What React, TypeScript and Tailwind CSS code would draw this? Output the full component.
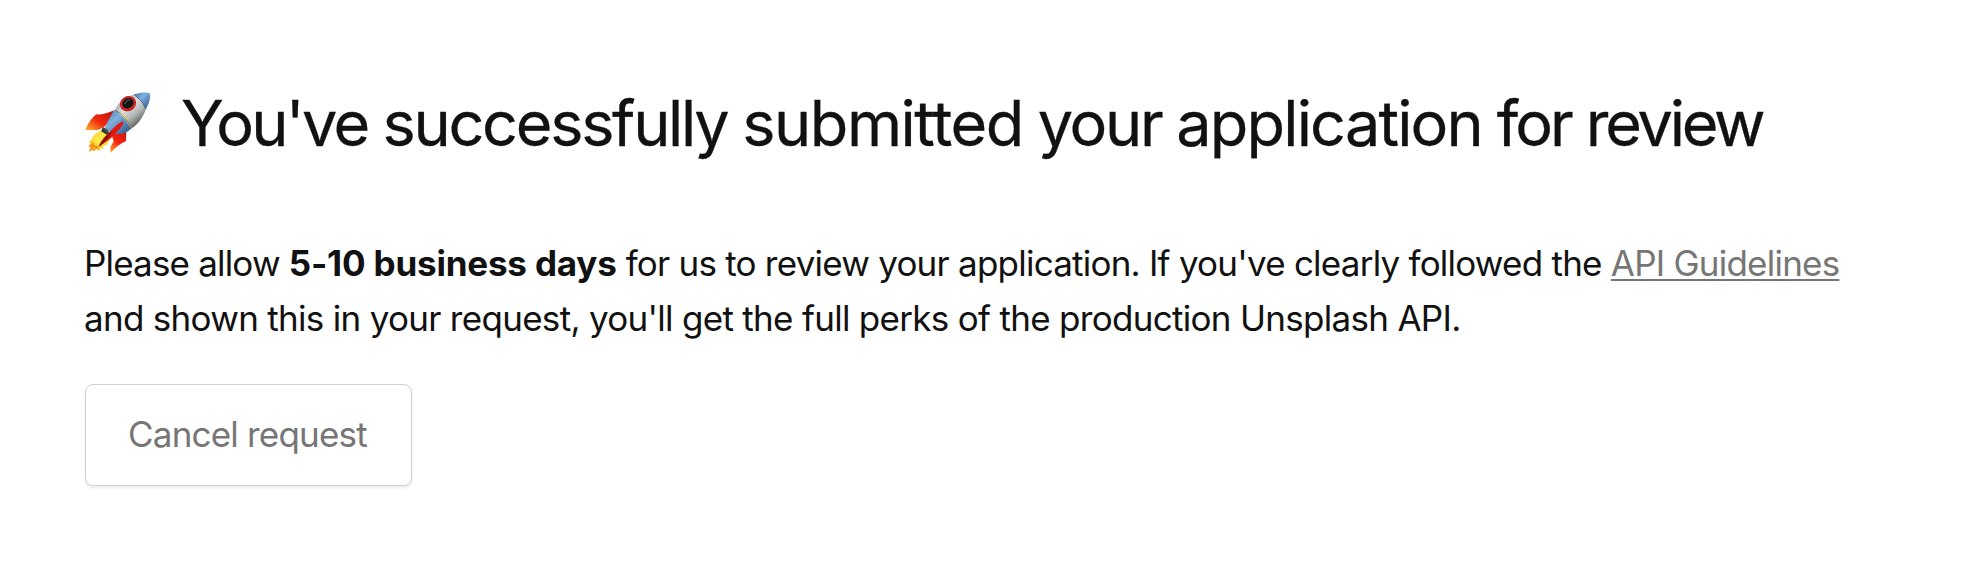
function Rocket() {
  return (
    <svg viewBox="42 33 204 189" className="mb-[4px] h-[63px] w-[68px] shrink-0" aria-hidden="true">
      <defs>
        <linearGradient id="blue" x1="0" y1="0" x2="1" y2="1">
          <stop offset="0" stopColor="#3f6fa6" />
          <stop offset="0.4" stopColor="#7fb0de" />
          <stop offset="1" stopColor="#234f86" />
        </linearGradient>
        <linearGradient id="silver" x1="0.2" y1="0.1" x2="0.8" y2="0.9">
          <stop offset="0" stopColor="#9a9fa2" />
          <stop offset="0.35" stopColor="#dcdedc" />
          <stop offset="0.65" stopColor="#b0b4b1" />
          <stop offset="1" stopColor="#4c504d" />
        </linearGradient>
        <linearGradient id="finLeft" x1="1" y1="0" x2="0" y2="1">
          <stop offset="0" stopColor="#b80f08" />
          <stop offset="0.55" stopColor="#f02a10" />
          <stop offset="1" stopColor="#ffb62e" />
        </linearGradient>
        <linearGradient id="finRight" x1="0.8" y1="0" x2="0.1" y2="1">
          <stop offset="0" stopColor="#d3160d" />
          <stop offset="0.5" stopColor="#f3240f" />
          <stop offset="1" stopColor="#ff9a28" />
        </linearGradient>
        <radialGradient id="flame" cx="0.55" cy="0.4" r="0.65">
          <stop offset="0" stopColor="#fff56a" />
          <stop offset="0.6" stopColor="#ffd22b" />
          <stop offset="1" stopColor="#f78b16" />
        </radialGradient>
      </defs>
      <path d="M132 91C116 98 98 106 80 103C65 113 54 131 46 150C60 149 74 151 86 149L103 140L118 124Z" fill="url(#finLeft)" />
      <path d="M169 155L168 183C152 190 138 201 122 218L121 202L131 184L126 168L145 153Z" fill="url(#finRight)" />
      <path d="M99 151C82 154 67 168 64 181L57 184L62 190L55 198L62 203L56 216L66 210L74 213L79 206L88 213L91 204L100 207L99 199L110 194L120 178L122 163Z" fill="url(#flame)" />
      <path d="M68 185L62 203L71 201L81 208L86 199L75 197Z" fill="#f28a17" />
      <path d="M76 181L82 171L98 158L109 160L112 170L94 187L79 191Z" fill="#ffe947" />
      <path d="M136 88L156 99L181 123L184 145C174 157 160 163 145 162L124 158L104 145C112 127 121 105 136 88Z" fill="url(#blue)" />
      <path d="M136 88C143 70 165 51 194 43L224 62L229 85C219 113 204 134 182 147L166 119Z" fill="url(#silver)" />
      <path d="M193 43C209 37 230 35 239 40C242 52 239 69 228 86L216 66Z" fill="url(#blue)" />
      <path d="M192 43L215 64L228 88" fill="none" stroke="#27486d" strokeWidth="2" />
      <path d="M137 90Q172 111 183 145" fill="none" stroke="#8b8453" strokeWidth="3" />
      <path d="M155 102L173 119" fill="none" stroke="#ffdc3d" strokeWidth="3" />
      <path d="M98 141L113 149L118 160L110 164L94 154Z" fill="#263636" />
      <path d="M100 145L112 158M106 145L116 158" stroke="#66756f" strokeWidth="2" />
      <path d="M158 124C163 127 159 135 149 147L124 173L87 200C91 184 107 166 124 151C134 142 145 129 158 124Z" fill="#e01810" />
      <path d="M87 200C92 184 111 165 126 153C121 167 108 185 87 200Z" fill="#85100d" />
      <ellipse cx="174" cy="71" rx="25" ry="22" transform="rotate(-32 174 71)" fill="#bd1515" />
      <ellipse cx="174" cy="71" rx="22" ry="19" transform="rotate(-32 174 71)" fill="#e52a25" />
      <ellipse cx="174" cy="70" rx="18" ry="15" transform="rotate(-32 174 70)" fill="#111617" />
      <path d="M165 72Q169 60 181 59" fill="none" stroke="#4d5455" strokeWidth="4" />
    </svg>
  );
}

export default function App() {
  return (
    <main className="h-[574px] bg-white pl-[84px] pt-[84px] font-['Inter',sans-serif] text-[#111111]">
      <header className="flex h-20 items-center">
        <Rocket />
        <h1 className="mb-[2px] ml-[29px] whitespace-nowrap text-[63px] font-normal leading-[80px] tracking-[-2.8px] [-webkit-text-stroke:0.3px_#111111]">
          <span className="tracking-[-2.7px]">You've</span>{" "}
          <span className="tracking-[-2.3px]">successfully</span>{" "}
          <span className="tracking-[-1.5px]">submitted</span>{" "}
          <span className="tracking-[-2.3px]">your</span>{" "}
          <span className="tracking-[-1.85px]">application</span>{" "}
          <span className="tracking-[-3px]">for</span>{" "}
          <span className="tracking-[-3.2px]">review</span>
        </h1>
      </header>
      <p className="mt-[72px] whitespace-nowrap text-[35px] leading-[55px] tracking-[-0.7px]">
        <span className="tracking-[-0.82px]">Please allow </span>
        <strong className="font-bold tracking-[-0.19px]">5-10 business days</strong>
        <span className="tracking-[-0.77px]"> for us to review your application. If you've clearly followed the </span>
        <a href="#" className="tracking-[-0.77px] text-[#767676] underline decoration-[2px] underline-offset-[3px]">API Guidelines</a>
        <br />
        and shown this in your request, you'll get the full perks of the production Unsplash API.
      </p>
      <button className="ml-px mt-[38px] flex h-[102px] w-[327px] items-center justify-center whitespace-nowrap rounded-lg border border-[#d1d1d1] bg-white pb-[2px] pr-[2px] text-[35px] tracking-[-0.8px] text-[#767676] shadow-[0_2px_3px_rgba(0,0,0,0.08)]">
        Cancel request
      </button>
    </main>
  );
}
